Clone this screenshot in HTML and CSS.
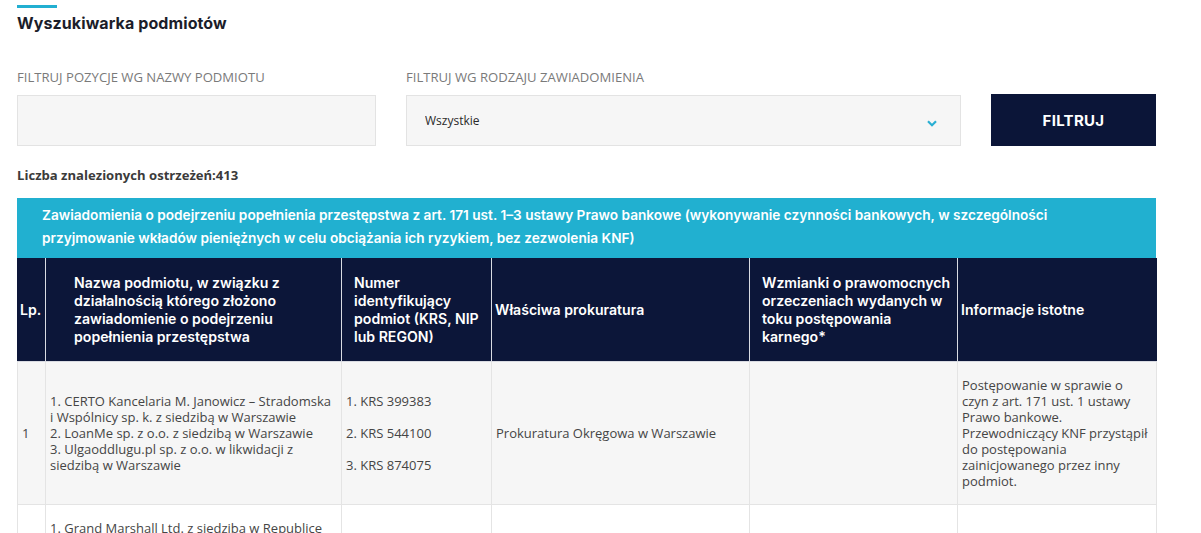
FILE: index.html
```html
<!DOCTYPE html>
<html lang="pl">
<head>
<meta charset="utf-8">
<title>Wyszukiwarka podmiotów</title>
<link rel="stylesheet" href="styles.css">
</head>
<body>
<main class="page">
  <div class="accent"></div>
  <h1 class="title">Wyszukiwarka podmiotów</h1>

  <form class="filters">
    <div class="field field-name">
      <label class="field-label" for="q">FILTRUJ POZYCJE WG NAZWY PODMIOTU</label>
      <input class="input" id="q" type="text">
    </div>
    <div class="field field-type">
      <label class="field-label" for="t">FILTRUJ WG RODZAJU ZAWIADOMIENIA</label>
      <div class="select-wrap">
        <select class="select" id="t">
          <option>Wszystkie</option>
        </select>
        <svg class="chevron" width="10" height="7" viewBox="0 0 10 7" aria-hidden="true">
          <path d="M1 1.2 L5 5.2 L9 1.2" fill="none" stroke="#2aafd3" stroke-width="2.2"/>
        </svg>
      </div>
    </div>
    <button class="btn" type="button">FILTRUJ</button>
  </form>

  <p class="count">Liczba znalezionych ostrzeżeń:413</p>

  <section class="results">
    <h2 class="banner">Zawiadomienia o podejrzeniu popełnienia przestępstwa z art. 171 ust. 1–3 ustawy Prawo bankowe (wykonywanie czynności bankowych, w szczególności przyjmowanie wkładów pieniężnych w celu obciążania ich ryzykiem, bez zezwolenia KNF)</h2>
    <table class="grid">
      <colgroup>
        <col class="c-lp">
        <col class="c-name">
        <col class="c-id">
        <col class="c-pros">
        <col class="c-notes">
        <col class="c-info">
      </colgroup>
      <thead>
        <tr>
          <th class="h-lp">Lp.</th>
          <th class="h-name">Nazwa podmiotu, w związku z działalnością którego złożono zawiadomienie o podejrzeniu popełnienia przestępstwa</th>
          <th class="h-id">Numer identyfikujący podmiot (KRS, NIP lub REGON)</th>
          <th class="h-pros">Właściwa prokuratura</th>
          <th class="h-notes">Wzmianki o prawomocnych orzeczeniach wydanych w toku postępowania karnego*</th>
          <th class="h-info">Informacje istotne</th>
        </tr>
      </thead>
      <tbody>
        <tr class="odd">
          <td>1</td>
          <td>1. CERTO Kancelaria M. Janowicz – Stradomska i Wspólnicy sp. k. z siedzibą w Warszawie<br>2. LoanMe sp. z o.o. z siedzibą w Warszawie<br>3. Ulgaoddlugu.pl sp. z o.o. w likwidacji z siedzibą w Warszawie</td>
          <td>1. KRS 399383<br><br>2. KRS 544100<br><br>3. KRS 874075</td>
          <td>Prokuratura Okręgowa w Warszawie</td>
          <td></td>
          <td>Postępowanie w sprawie o czyn z art. 171 ust. 1 ustawy Prawo bankowe. Przewodniczący KNF przystąpił do postępowania zainicjowanego przez inny podmiot.</td>
        </tr>
        <tr>
          <td>2</td>
          <td>1. Grand Marshall Ltd. z siedzibą w Republice Seszeli<br>2. Grand Marshall sp. z o.o. z siedzibą w Warszawie<br>3. Trade Capital sp. z o.o. z siedzibą w Warszawie</td>
          <td></td>
          <td></td>
          <td></td>
          <td></td>
        </tr>
      </tbody>
    </table>
  </section>
</main>
</body>
</html>
```

FILE: styles.css
```css
* {
  box-sizing: border-box;
}

body {
  margin: 0;
  background: #fff;
  font-family: "Open Sans", "Liberation Sans", sans-serif;
  color: #444;
}

.page {
  width: 1139px;
  margin-left: 17px;
  padding-top: 5px;
}

.accent {
  width: 40px;
  height: 3px;
  background: #22afd1;
}

.title {
  margin: 5px 0 0;
  font-family: "Inter", "Liberation Sans", sans-serif;
  font-weight: 700;
  font-size: 16px;
  line-height: 20px;
  color: #1b1d2a;
  letter-spacing: 0.1px;
}

/* filter bar */
.filters {
  display: flex;
  align-items: flex-end;
  gap: 30px;
  margin-top: 36px;
}

.field {
  display: flex;
  flex-direction: column;
  gap: 10px;
}

.field-name {
  width: 359px;
}

.field-type {
  width: 555px;
}

.field-label {
  font-size: 13.1px;
  line-height: 16px;
  color: #7a7a7a;
}

.input,
.select {
  display: block;
  width: 100%;
  height: 51px;
  margin: 0;
  border: 1px solid #e3e3e3;
  background: #f6f6f6;
  border-radius: 0;
  font-family: inherit;
  outline: none;
}

.select-wrap {
  position: relative;
}

.select {
  appearance: none;
  -webkit-appearance: none;
  padding: 0 18px;
  font-size: 12px;
  color: #2a2a2a;
}

.chevron {
  position: absolute;
  right: 24px;
  top: 25px;
}

.btn {
  width: 165px;
  height: 52px;
  border: 0;
  background: #0b1538;
  color: #fff;
  font-family: "Inter", "Liberation Sans", sans-serif;
  font-weight: 700;
  font-size: 15px;
  letter-spacing: 0.3px;
  cursor: pointer;
}

.count {
  margin: 20px 0 0;
  font-size: 13.1px;
  line-height: 18px;
  font-weight: 700;
  color: #3b3b3b;
}

/* results table */
.results {
  margin-top: 14px;
}

.banner {
  margin: 0;
  padding: 6px 88px 8px 25px;
  background: #21b0d0;
  color: #fff;
  font-family: "Inter", "Liberation Sans", sans-serif;
  font-weight: 600;
  font-size: 13.65px;
  line-height: 23px;
}

.grid {
  width: 100%;
  table-layout: fixed;
  border-collapse: collapse;
}

.c-lp { width: 28px; }
.c-name { width: 296px; }
.c-id { width: 150px; }
.c-pros { width: 258px; }
.c-notes { width: 208px; }
.c-info { width: 199px; }

.grid th {
  background: #0c1639;
  color: #fff;
  text-align: left;
  font-family: "Inter", "Liberation Sans", sans-serif;
  font-weight: 600;
  font-size: 14.1px;
  line-height: 18px;
  padding: 16px 4px 15px;
  border: 1px solid #d9dbe2;
  border-top: 0;
  vertical-align: middle;
}

.grid th:first-child {
  border-left-color: #0c1639;
}

.grid th:last-child {
  border-right-color: #0c1639;
}

.grid .h-lp { padding-left: 2px; padding-right: 0; }
.grid .h-name { padding-left: 28px; padding-right: 20px; }
.grid .h-id { padding-left: 12px; padding-right: 2px; }
.grid .h-pros { padding-left: 3px; }
.grid .h-notes { padding-left: 12px; padding-right: 2px; }
.grid .h-info { padding-left: 3px; }

.grid td {
  padding: 15px 4px;
  border: 1px solid #e4e4e4;
  font-size: 13px;
  line-height: 16px;
  color: #454545;
  vertical-align: middle;
}

.grid tr.odd td {
  background: #f6f6f6;
}
```
